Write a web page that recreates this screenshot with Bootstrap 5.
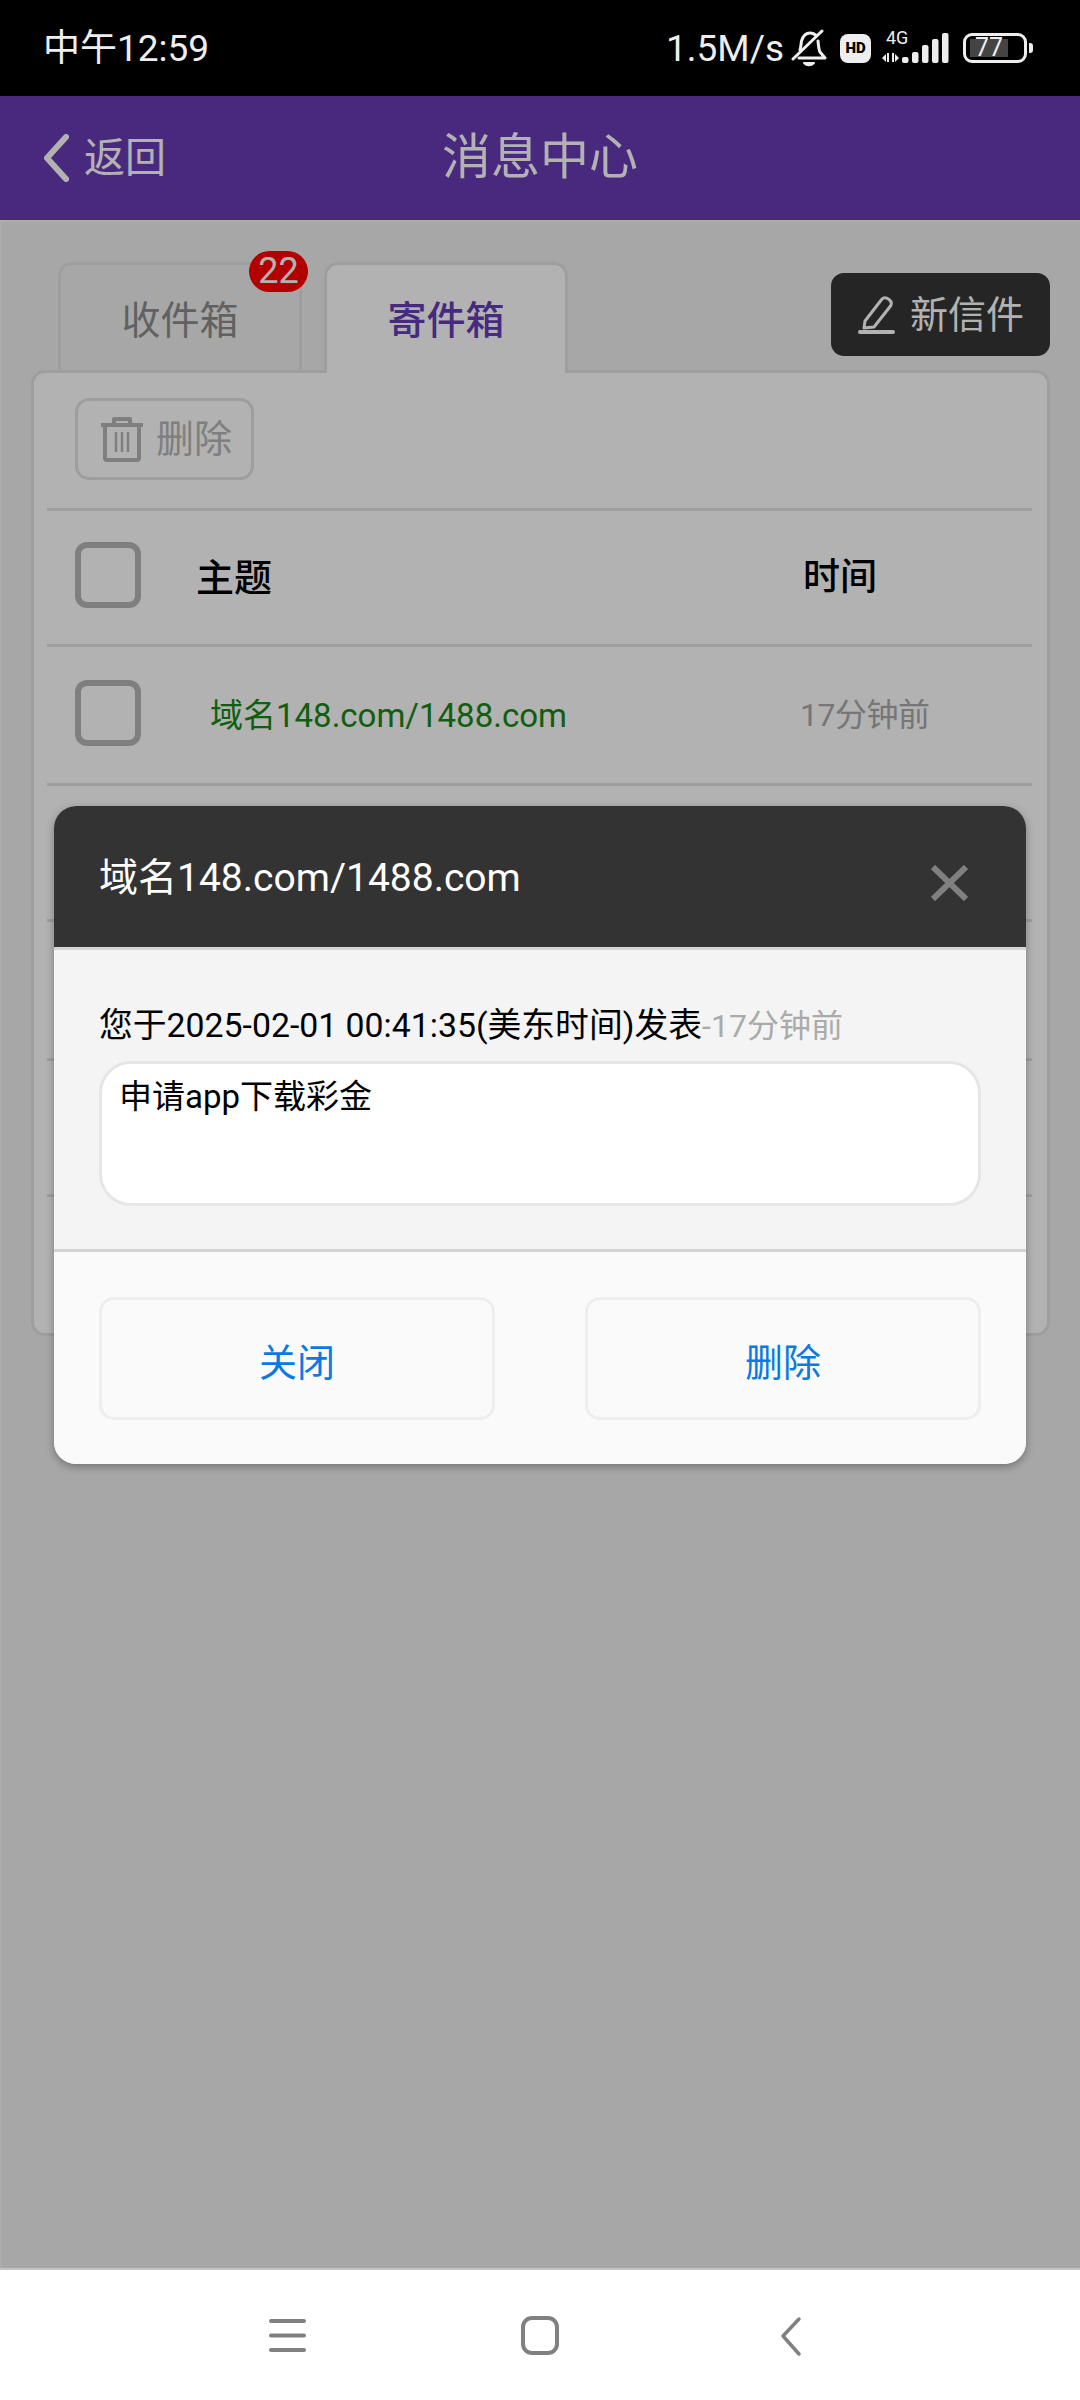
<!DOCTYPE html>
<html lang="zh-CN">
<head>
    <meta charset="UTF-8">
    <meta name="viewport" content="width=device-width, initial-scale=1.0">
    <title>消息中心</title>
    <link href="https://cdn.jsdelivr.net/npm/bootstrap@5.3.0/dist/css/bootstrap.min.css" rel="stylesheet">
    <style>
        html, body { margin: 0; height: 2400px; }
        body {
            width: 1080px;
            background: #fff;
            font-family: Roboto, "Noto Sans CJK SC", sans-serif;
            color: #000;
            position: relative;
            overflow: hidden;
        }
        /* status bar */
        .status-bar { height: 96px; background: #000; color: #eee; padding: 0 47px 0 43px; }
        .status-time { font-size: 37px; line-height: 1; }
        .status-speed { font-size: 37px; line-height: 1; margin-right: 7px; }
        .status-hd { width: 31px; height: 29px; background: #eee; border-radius: 8px; color: #000; font-size: 15px; font-weight: 900; line-height: 1; margin: 0 11px 0 13px; }
        .status-net { width: 70px; height: 38px; position: relative; margin-right: 11px; }
        .status-4g { position: absolute; left: 4px; top: 0; font-size: 18px; line-height: 18px; }
        .battery { width: 64px; height: 30px; border: 3px solid #eee; border-radius: 9px; padding: 3px 16px 3px 4px; position: relative; }
        .battery-fill { background: #444; height: 100%; font-size: 25px; line-height: 18px; color: #eee; }
        .battery-nub { width: 4px; height: 10px; background: #eee; border-radius: 0 3px 3px 0; margin-left: 2px; }
        /* app header */
        .app-head { height: 124px; background: #673cb4; color: #fff; position: relative; padding: 0 0 0 43px; }
        .app-back { font-size: 41px; line-height: 1; gap: 15px; }
        .app-title { position: absolute; left: 0; right: 0; text-align: center; font-size: 49px; line-height: 124px; top: 0; }
        /* page */
        .page-main { height: 2050px; background: #f0f0f0; padding: 40px 30px 0 29px; border-left: 2px solid #f6f6f6; border-top: 2px solid #f6f6f6; }
        .tab-line { height: 108px; padding-left: 27px; }
        .tab-line .nav-tabs { border: 0; gap: 22px; --bs-nav-tabs-border-width: 3px; }
        .tab-line .nav-item { position: relative; }
        .tab-line .nav-link {
            width: 244px; height: 111px; padding: 23px 0 0; margin: 0;
            text-align: center; font-size: 39px; line-height: 66px;
            color: #8c8c8c;
            border: 3px solid #e2e2e2; border-bottom: 0;
            border-radius: 14px 14px 0 0;
            background: transparent;
        }
        .tab-line .nav-link.active { color: #663db6; background: #fff; font-weight: 500; border-color: #e2e2e2; position: relative; z-index: 2; }
        .tab-count {
            position: absolute; left: 191px; top: -11px; width: 59px; height: 41px;
            background: #f00; color: #fff; border-radius: 21px;
            font-size: 36px; line-height: 41px; text-align: center;
            z-index: 3;
        }
        .new-btn { width: 219px; height: 83px; margin: 11px 0 0; background: #363636; border: 0; color: #fff; border-radius: 13px; font-size: 38px; line-height: 1; padding: 0 0 0 27px; gap: 14px; }
        .msg-panel { background: #fff; border: 3px solid #e2e2e2; border-radius: 14px; height: 966px; padding: 0 15px 0 13px; overflow: hidden; }
        .msg-tools { height: 135px; padding: 25px 0 0 28px; }
        .del-btn { width: 179px; height: 82px; background: transparent; border: 3px solid #e2e2e2; border-radius: 14px; color: #b6b6b6; font-size: 38px; line-height: 1; padding: 0 0 0 22px; gap: 12px; }
        .msg-row { height: 136px; border-top: 3px solid #e2e2e2; padding-left: 28px; }
        .msg-row-tall { height: 139px; }
        .msg-check { width: 66px; height: 66px; margin-top: -5px; border: 6px solid #b6b6b6; border-radius: 12px; flex: none; }
        .msg-subject { width: 662px; padding-left: 55px; font-size: 38px; font-weight: 500; line-height: 1; }
        .msg-time { font-size: 37px; font-weight: 500; line-height: 1; }
        .msg-subject-link { padding-left: 69px; font-size: 33px; font-weight: 400; color: #168816; }
        .msg-time-ago { font-size: 32px; font-weight: 400; color: #aaa; margin-left: -3px; letter-spacing: -.5px; }
        /* dim layer + dialog */
        .dim-layer { position: absolute; left: 0; right: 0; top: 96px; height: 2172px; background: rgba(0,0,0,.3); z-index: 10; }
        .msg-dialog { position: absolute; left: 54px; top: 806px; width: 972px; height: 658px; z-index: 11; border: 0; border-radius: 22px; overflow: hidden; box-shadow: 0 3px 8px rgba(0,0,0,.3); background: #fafafa; }
        .msg-dialog .modal-header { height: 141px; background: #333; color: #fff; border: 0; border-radius: 0; padding: 0 58px 0 45px; }
        .dialog-title { font-size: 39px; line-height: 1; margin: 3px 0 0; font-weight: 400; }
        .dialog-x { margin-top: 12px; }
        .msg-dialog .modal-body { height: 305px; flex: none; background: #f4f4f4; border-top: 3px solid #d4d4d4; border-bottom: 3px solid #d4d4d4; padding: 0 45px; }
        .sent-line { font-size: 33.800px; line-height: 38px; margin: 57px 0 0; white-space: nowrap; }
        .sent-ago { color: #aaa; font-size: 32px; }
        .msg-box { height: 145px; margin-top: 16px; background: #fff; border: 3px solid #e6e6e6; border-radius: 32px; padding: 14px 17px; font-size: 33px; line-height: 38px; }
        .msg-dialog .modal-footer { height: 212px; padding: 45px 45px 0; border: 0; align-items: flex-start; justify-content: space-between; flex-wrap: nowrap; background: #fafafa; }
        .dialog-btn { width: 396px; height: 123px; margin: 0; background: #fafafa; border: 3px solid #eee; border-radius: 15px; color: #0a7ae2; font-size: 38px; line-height: 1; padding: 8px 0 0; }
        /* android nav */
        .sys-nav { height: 130px; background: #fff; position: absolute; left: 0; right: 0; top: 2270px; border-top: 0; }
        .sys-line { position: absolute; left: 0; right: 0; top: 2268px; height: 2px; background: #c4c4c4; z-index: 12; }
    </style>
</head>
<body>
    <div class="status-bar d-flex align-items-center justify-content-between">
        <span class="status-time">中午12:59</span>
        <div class="d-flex align-items-center">
            <span class="status-speed">1.5M/s</span>
            <svg width="36" height="38" viewBox="0 0 36 38" fill="none" stroke="#eee" stroke-width="3" stroke-linecap="round" stroke-linejoin="round">
                <path d="M9 21c1-3 1-6 1.500-9C12 7 15 4 19 4c2 0 4 .7 5.500 2M27 12c.5 4 .5 8 2 11l5 6H8"/>
                <path d="M31 2 2 30"/>
                <path d="M13 34c3 3 7 3 10 0z" fill="#eee" stroke-width="2"/>
            </svg>
            <span class="status-hd d-flex align-items-center justify-content-center">HD</span>
            <div class="status-net">
                <span class="status-4g">4G</span>
                <svg width="70" height="38" viewBox="0 0 70 38" fill="#eee">
                    <path d="M0 29l4-4v8zM5 24h2v9h-2zM10 24h2v9h-2zM13 25l4 4-4 4z"/>
                    <rect x="20" y="28" width="6.500" height="6" rx="2"/>
                    <rect x="30" y="23" width="6.500" height="11" rx="2"/>
                    <rect x="40" y="16" width="6.500" height="18" rx="2"/>
                    <rect x="50" y="10" width="6.500" height="24" rx="2"/>
                    <rect x="60" y="4" width="6.500" height="30" rx="2"/>
                </svg>
            </div>
            <div class="battery"><div class="battery-fill text-center">77</div></div>
            <div class="battery-nub"></div>
        </div>
    </div>

    <div class="app-head d-flex align-items-center">
        <div class="app-back d-flex align-items-center">
            <svg width="26" height="48" viewBox="0 0 26 48" fill="none" stroke="#fff" stroke-width="6" stroke-linecap="round" stroke-linejoin="round"><path d="M23 3 4 24l19 21"/></svg>
            <span>返回</span>
        </div>
        <div class="app-title">消息中心</div>
    </div>

    <div class="page-main">
        <div class="tab-line d-flex justify-content-between align-items-start">
            <ul class="nav nav-tabs">
                <li class="nav-item">
                    <a class="nav-link" href="#">收件箱</a>
                    <span class="tab-count">22</span>
                </li>
                <li class="nav-item"><a class="nav-link active" href="#">寄件箱</a></li>
            </ul>
            <button class="new-btn btn d-flex align-items-center" type="button">
                <svg width="38" height="38" viewBox="0 0 38 38" fill="none" stroke="#fff" stroke-width="3" stroke-linejoin="round" stroke-linecap="round">
                    <path d="M7 25 24 3c2-2 5-1 7 .5s3 4 1.500 6.500L16 31l-10 1z"/>
                    <path d="M2 36h33" stroke-width="4"/>
                </svg>
                <span>新信件</span>
            </button>
        </div>
        <div class="msg-panel">
            <div class="msg-tools">
                <button class="del-btn btn d-flex align-items-center" type="button">
                    <svg width="44" height="46" viewBox="0 0 44 46" fill="none" stroke="#b6b6b6" stroke-width="4" stroke-linejoin="round">
                        <path d="M1 9h42M14 8V3h16v5M5 9v33c0 1.500 1 2 2 2h30c1 0 2-.5 2-2V9"/>
                        <path d="M16 16v20M22 16v20M28 16v20" stroke-width="2.500"/>
                    </svg>
                    <span>删除</span>
                </button>
            </div>
            <div class="msg-row d-flex align-items-center">
                <span class="msg-check"></span>
                <div class="msg-subject">主题</div>
                <div class="msg-time">时间</div>
            </div>
            <div class="msg-row msg-row-tall d-flex align-items-center">
                <span class="msg-check"></span>
                <div class="msg-subject msg-subject-link">域名148.com/1488.com</div>
                <div class="msg-time msg-time-ago">17分钟前</div>
            </div>
            <div class="msg-row"></div>
            <div class="msg-row msg-row-tall"></div>
            <div class="msg-row"></div>
            <div class="msg-row"></div>
        </div>
    </div>

    <div class="dim-layer"></div>

    <div class="msg-dialog modal-content">
        <div class="modal-header d-flex justify-content-between align-items-center">
            <h5 class="dialog-title">域名148.com/1488.com</h5>
            <svg class="dialog-x" width="37" height="36" viewBox="0 0 37 36" fill="none" stroke="#808080" stroke-width="6"><path d="M2 2l33 32M35 2 2 34"/></svg>
        </div>
        <div class="modal-body">
            <p class="sent-line">您于2025-02-01 00:41:35(美东时间)发表<span class="sent-ago">-17分钟前</span></p>
            <div class="msg-box">申请app下载彩金</div>
        </div>
        <div class="modal-footer">
            <button class="dialog-btn btn" type="button">关闭</button>
            <button class="dialog-btn btn" type="button">删除</button>
        </div>
    </div>

    <div class="sys-line"></div>
    <div class="sys-nav">
        <svg width="1080" height="130" viewBox="0 0 1080 130" fill="none" stroke="#808080" stroke-width="4" stroke-linecap="round" stroke-linejoin="round">
            <path d="M271 51h33M271 65.500h33M271 80h33"/>
            <rect x="523" y="48" width="34" height="35" rx="9"/>
            <path d="M799 49 783 66l16 18" stroke-width="3.500"/>
        </svg>
    </div>
</body>
</html>
